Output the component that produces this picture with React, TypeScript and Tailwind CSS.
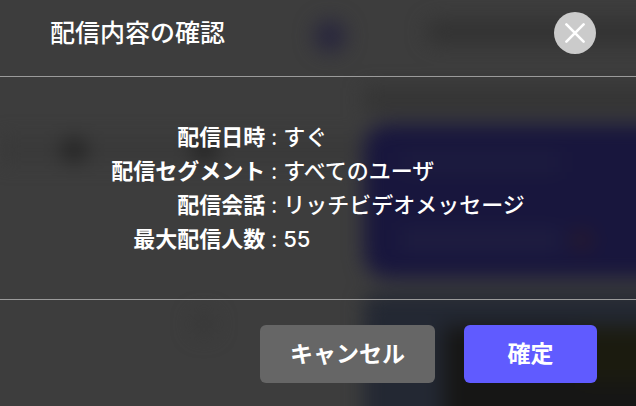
import React from "react";

const rows = [
  { label: "配信日時", value: "すぐ" },
  { label: "配信セグメント", value: "すべてのユーザ" },
  { label: "配信会話", value: "リッチビデオメッセージ" },
  { label: "最大配信人数", value: "55" },
];

// Dimmed, out-of-focus page that shows through behind the dialog.
function Backdrop() {
  return (
    <div aria-hidden="true" className="absolute inset-0 -z-10 flex flex-col overflow-hidden bg-[#3d3d3d]">
      <div className="-mr-10 -mb-10 flex flex-1 flex-col blur-[10px]">
        <div className="flex h-[88px] items-start gap-20 pt-5 pl-[314px]">
          <div className="size-8 rounded-full bg-[#28263d]" />
          <div className="h-6 flex-1 rounded-full bg-[#323232]" />
        </div>
        <div className="flex flex-1">
          <div className="flex w-[364px] flex-col gap-[150px] pt-[50px]">
            <div className="flex h-6 items-center gap-[106px] bg-[#393939] pl-[62px]">
              <div className="size-6 rounded-full bg-[#212121]" />
              <div className="size-6 rounded-full bg-[#212121]" />
            </div>
            <div className="ml-[192px] size-6 rounded-full bg-[#383838]" />
          </div>
          <div className="flex flex-1 flex-col">
            <div className="mb-3 h-6 bg-[#343434]" />
            <div className="flex h-[154px] flex-col justify-between rounded-3xl bg-[#18163d] px-9 py-7">
              <div className="h-5 w-40 bg-[#1d1c3e]" />
              <div className="flex items-center justify-between">
                <div className="h-5 w-40 bg-[#1f1e40]" />
                <div className="mr-12 size-5 rounded-full bg-[#2a1a2a]" />
              </div>
            </div>
            <div className="mt-4 flex flex-1 rounded-t-xl bg-[#232833] pt-8 pl-[80px]">
              <div className="flex-1 bg-[#161615]">
                <div className="ml-auto h-14 w-24 bg-[#1b1b0f]" />
              </div>
            </div>
          </div>
        </div>
      </div>
    </div>
  );
}

export default function App() {
  return (
    <div
      role="dialog"
      aria-labelledby="dialog-title"
      lang="ja"
      className="relative isolate flex min-h-screen flex-col font-['Inter','Noto_Sans_CJK_JP',sans-serif] text-white"
    >
      <Backdrop />
      <header className="flex items-center justify-between border-b border-[#9b9b9b] pt-3 pr-10 pb-[22px] pl-[50px]">
        <h1 id="dialog-title" className="text-[25px] leading-10 font-medium">
          配信内容の確認
        </h1>
        <button
          type="button"
          aria-label="閉じる"
          className="flex size-[42px] items-center justify-center rounded-full bg-[#cbcbcb]"
        >
          <svg viewBox="0 0 20 20" className="size-5" fill="none" stroke="currentColor" strokeWidth="2.6" strokeLinecap="round">
            <path d="M1.4 1.4 18.6 18.6M18.6 1.4 1.4 18.6" />
          </svg>
        </button>
      </header>

      <main className="flex flex-1 items-center justify-center px-6 py-[43px]">
        <table className="text-[22px] leading-[34px] font-medium">
          <tbody>
            {rows.map((row) => (
              <tr key={row.label}>
                <th scope="row" className="p-0 text-right font-bold">
                  {row.label}
                </th>
                <td className="w-[18px] p-0 text-center font-normal">:</td>
                <td className="p-0">{row.value}</td>
              </tr>
            ))}
          </tbody>
        </table>
      </main>

      <footer className="flex justify-end gap-[29px] border-t border-[#9b9b9b] pt-[25px] pr-[39px] pb-[23px] pl-6">
        <button type="button" className="h-[58px] w-[175px] rounded-md bg-[#666666] text-[23px] font-bold">
          キャンセル
        </button>
        <button type="button" className="h-[58px] w-[133px] rounded-md bg-[#605bff] text-[23px] font-bold">
          確定
        </button>
      </footer>
    </div>
  );
}
